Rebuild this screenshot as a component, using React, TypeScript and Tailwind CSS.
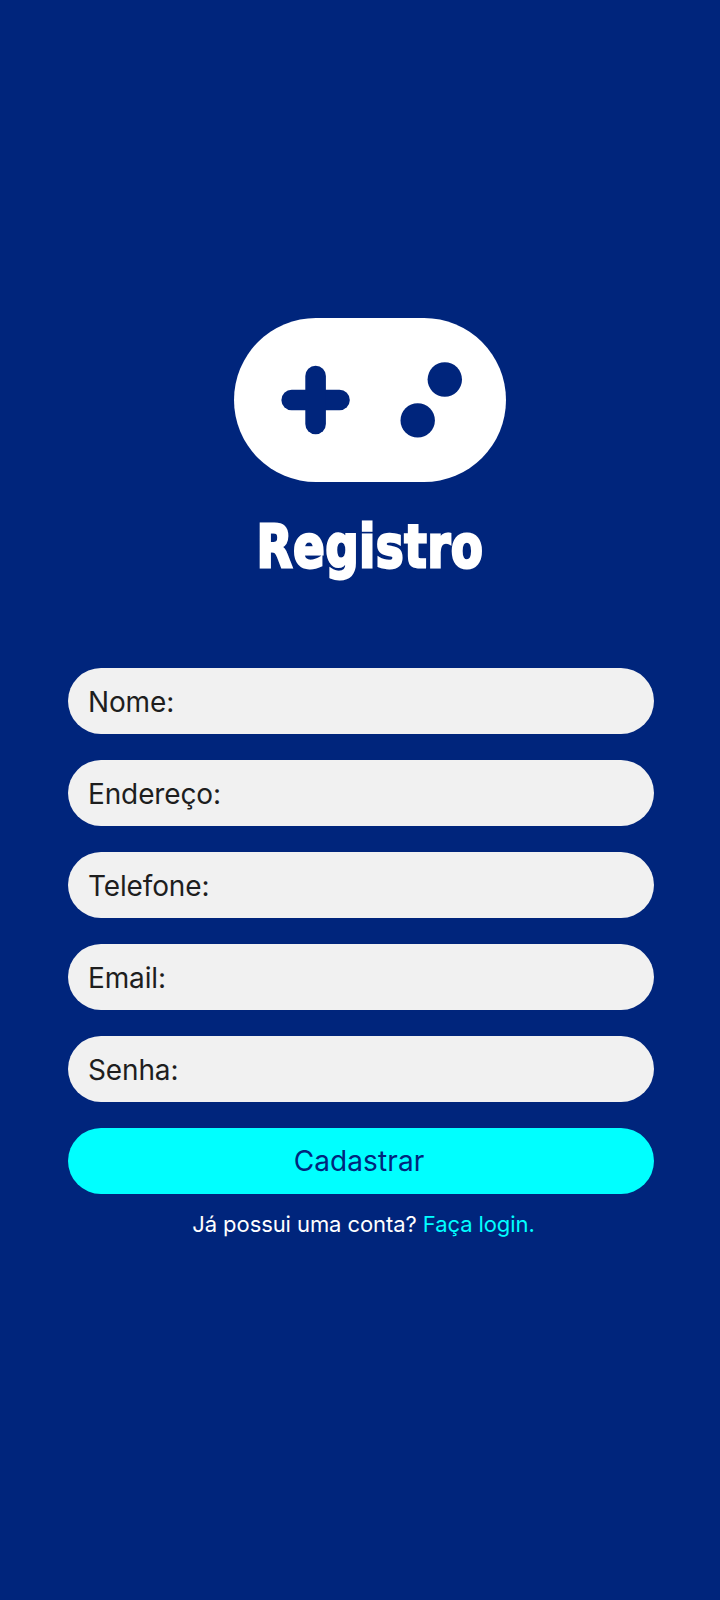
const fields = [
  { label: "Nome:", type: "text", name: "nome" },
  { label: "Endereço:", type: "text", name: "endereco" },
  { label: "Telefone:", type: "tel", name: "telefone" },
  { label: "Email:", type: "email", name: "email" },
  { label: "Senha:", type: "password", name: "senha" },
];

function Gamepad() {
  return (
    <svg className="ml-[20px] h-[164px] w-[272px]" viewBox="0 0 272 164" aria-hidden="true">
      <rect width="272" height="164" rx="82" fill="#fff" />
      <g fill="#00257c">
        <rect x="47.4" y="71.7" width="68.4" height="20.6" rx="10.3" />
        <rect x="71.3" y="47.8" width="20.6" height="68.4" rx="10.3" />
        <circle cx="210.8" cy="61.5" r="17.2" />
        <circle cx="183.7" cy="102.4" r="17.2" />
      </g>
    </svg>
  );
}

export default function App() {
  return (
    <main className="flex h-[1600px] w-[720px] flex-col items-center bg-[#00257c] pt-[318px] font-['Inter',sans-serif]">
      <Gamepad />
      <h1 className="mt-[25px] ml-[21px] h-[80px] scale-x-[0.885] font-['DejaVu_Sans_Condensed','DejaVu_Sans',sans-serif] text-[58px] leading-[80px] font-bold tracking-[1px] whitespace-nowrap text-white [font-stretch:condensed] [stroke-linejoin:round] [-webkit-text-stroke:2.8px_white]">
        Registro
      </h1>
      <form className="mt-[81px] mr-[-2px] flex w-[586px] flex-col gap-[26px]">
        {fields.map((f) => (
          <input
            key={f.name}
            type={f.type}
            name={f.name}
            placeholder={f.label}
            className="h-[66px] w-full rounded-full bg-[#f1f1f1] px-5 pt-[2px] text-[28px] tracking-[-0.13px] text-[#1e1e1e] outline-none placeholder:text-[#1e1e1e] placeholder:opacity-100"
          />
        ))}
        <button type="button" className="h-[66px] w-full rounded-full bg-[#00ffff] pr-[4px] text-[28px] tracking-[0.1px] text-[#00257c]">
          Cadastrar
        </button>
      </form>
      <p className="mt-[14px] ml-[7px] text-[22px] leading-[32px] tracking-[-0.08px] whitespace-nowrap text-white">
        Já possui uma conta? <a className="text-[#00ffff]">Faça login.</a>
      </p>
    </main>
  );
}
